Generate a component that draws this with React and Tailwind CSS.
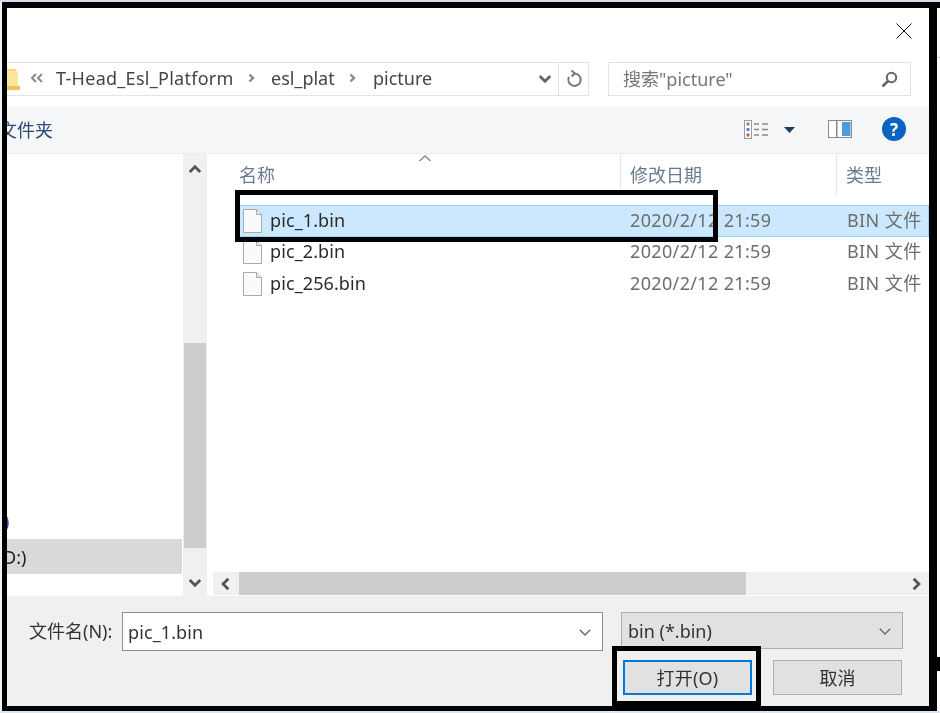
const files = [
  { name: "pic_1.bin", selected: true },
  { name: "pic_2.bin" },
  { name: "pic_256.bin" },
]

function Chevron({ d, className = "", stroke = "#555", width = 2.4 }) {
  return (
    <svg viewBox="0 0 12 12" className={className} fill="none" stroke={stroke} strokeWidth={width}>
      <path d={d} />
    </svg>
  )
}

function FileIcon() {
  return (
    <svg width="19" height="24" viewBox="0 0 19 24" className="shrink-0">
      <path d="M0.5 0.5H13.5L18.5 5.5V23.5H0.5Z" fill="#fafafa" stroke="#a9a9a9" />
      <path d="M13.5 0.5V5.5H18.5" fill="#e8e8e8" stroke="#a9a9a9" />
    </svg>
  )
}

function Crumb() {
  return <Chevron d="M3.5 2.5l3.5 3.5-3.5 3.5" stroke="#8a8a8a" width={2.4} className="w-[12px] h-[12px] shrink-0" />
}

export default function App() {
  return (
    <div className="relative w-[940px] h-[713px] overflow-hidden bg-[#dce6f1] flex flex-col font-['Noto_Sans','Noto_Sans_CJK_SC',sans-serif] text-[18px] leading-none text-[#333]">
      <div className="h-[2px] shrink-0 bg-[#d5dde8]" />
      <div className="flex h-[709px] shrink-0">
        <div className="w-[2px] shrink-0 bg-[#eef3f8]" />
        <div className="w-[935px] shrink-0 border-black border-l-[5px] border-r-[8px] border-t-[6px] border-b-[5px] bg-white flex flex-col overflow-hidden blur-[0.35px]">
          {/* Title bar */}
          <div className="h-[54px] shrink-0 flex justify-end items-start pt-[15px] pr-[17px]">
            <svg width="16" height="16" viewBox="0 0 16 16" stroke="#111" strokeWidth="1" fill="none">
              <path d="M0.5 0.5L15.5 15.5M15.5 0.5L0.5 15.5" />
            </svg>
          </div>

          {/* Address and search */}
          <div className="h-[34px] shrink-0 flex">
            <div className="w-[582px] border border-l-0 border-[#e3e3e3] flex items-center pb-[2px]">
              <svg width="13" height="24" viewBox="0 0 13 24" className="shrink-0">
                <path d="M0 3H9V20H13V24H0Z" fill="#f6d67f" />
                <path d="M0 5H11V21H0Z" fill="#fce59d" />
                <path d="M0 20H13V24H0Z" fill="#eec25c" />
              </svg>
              <svg width="13" height="10" viewBox="0 0 13 10" fill="none" stroke="#8a8a8a" strokeWidth="2" className="ml-[10px] shrink-0">
                <path d="M6 1L2 5L6 9M12 1L8 5L12 9" />
              </svg>
              <span className="ml-[13px] w-[177px] text-[#444] whitespace-nowrap tracking-[0.27px]">T-Head_Esl_Platform</span>
              <span className="ml-[13px]"><Crumb /></span>
              <span className="ml-[13px] w-[65px] text-[#444] whitespace-nowrap">esl_plat</span>
              <span className="ml-[11px]"><Crumb /></span>
              <span className="ml-[14px] text-[#444] whitespace-nowrap">picture</span>
              <span className="flex-1" />
              <Chevron d="M1.5 3.5L6 8l4.5-4.5" stroke="#666" className="w-[14px] h-[14px] mr-[6px] mt-[2px]" />
              <div className="w-[30px] h-[32px] mb-[-2px] border-l border-[#e3e3e3] flex items-center justify-center pl-[2px]">
                <svg width="17" height="18" viewBox="0 0 17 18" fill="none" stroke="#777" strokeWidth="2">
                  <path d="M8.5 3.5a6.2 6.2 0 1 1-5.6 3.5" />
                  <path d="M5.5 0.5L8.8 3.5L5.5 6.5" />
                </svg>
              </div>
            </div>
            <div className="ml-[19px] w-[303px] border border-[#e3e3e3] flex items-center justify-between pl-[14px] pr-[12px]">
              <span className="text-[#777]">搜索"picture"</span>
              <svg width="17" height="17" viewBox="0 0 17 17" fill="none" stroke="#666">
                <circle cx="10.5" cy="6.5" r="4.7" strokeWidth="2" />
                <path d="M7 10L1.5 15.5" strokeWidth="2.6" />
              </svg>
            </div>
          </div>

          <div className="h-[11px] shrink-0" />

          {/* Toolbar */}
          <div className="h-[47px] shrink-0 bg-[#f5f6f7] border-b border-[#e9ecef] flex items-center">
            <span className="ml-[-8px] text-[#2a4a73] whitespace-nowrap">文件夹</span>
            <span className="flex-1" />
            <svg width="25" height="19" viewBox="0 0 25 19" className="mr-[15px] mb-[2px]">
              <rect x="0.5" y="0.5" width="7" height="18" fill="#fff" stroke="#9a9a9a" />
              <rect x="2.5" y="2.5" width="3" height="3" fill="#8a8a8a" />
              <rect x="2.5" y="8" width="3" height="3" fill="#4a90d9" />
              <rect x="2.5" y="13.5" width="3" height="3" fill="#d9534f" />
              <path d="M10 4h5M18 4h6M10 9.5h5M18 9.5h6M10 15h5M18 15h6" stroke="#8a8a8a" strokeWidth="1.4" />
            </svg>
            <svg width="11" height="6" viewBox="0 0 11 6" className="mr-[33px]">
              <path d="M0 0H11L5.5 6Z" fill="#1c3d66" />
            </svg>
            <svg width="24" height="18" viewBox="0 0 24 18" className="mr-[30px] mb-[2px]">
              <rect x="0.5" y="0.5" width="23" height="17" fill="#fff" stroke="#8a8a8a" />
              <rect x="8" y="1" width="1.5" height="16" fill="#8a8a8a" />
              <rect x="14" y="2" width="8.5" height="14" fill="#4a9be0" />
            </svg>
            <div className="w-[24px] h-[24px] mr-[23px] mb-[2px] rounded-full bg-[#0a63c0] flex items-center justify-center text-white font-bold text-[17px]">?</div>
          </div>

          {/* Body */}
          <div className="flex-1 min-h-0 flex">
            {/* Navigation pane */}
            <div className="w-[176px] shrink-0 flex flex-col justify-end pb-[22px]">
              <div className="ml-[-3px] h-[17px] mb-[9px] text-[#4a3a9a] leading-[17px]">)</div>
              <div className="h-[35px] mr-[1px] bg-[#d9d9d9] flex items-center text-[#222] whitespace-nowrap"><span className="ml-[-4px]">D:)</span></div>
            </div>
            <div className="w-[24px] shrink-0 bg-[#f0f0f0] flex flex-col items-center">
              <Chevron d="M1.5 8.5L6 4l4.5 4.5" stroke="#555" className="w-[14px] h-[14px] mt-[8px]" />
              <div className="w-[22px] h-[205px] mt-[167px] bg-[#cdcdcd]" />
              <Chevron d="M1.5 3.5L6 8l4.5-4.5" stroke="#555" className="w-[14px] h-[14px] mt-[28px]" />
            </div>
            <div className="w-[6px] shrink-0" />

            {/* File list */}
            <div className="flex-1 min-w-0 flex flex-col relative">
              <div className="h-[41px] shrink-0 flex text-[#6b7a8c]">
                <div className="w-[407px] shrink-0 pl-[26px] pt-[12px] relative">
                  名称
                  <svg width="12" height="7" viewBox="0 0 12 7" fill="none" stroke="#888" strokeWidth="1.4" className="absolute left-[206px] top-[1px]">
                    <path d="M0.5 6L6 1L11.5 6" />
                  </svg>
                </div>
                <div className="w-[216px] shrink-0 border-l border-[#e5e5e5] pl-[9px] pt-[12px]">修改日期</div>
                <div className="flex-1 border-l border-[#e5e5e5] pl-[9px] pt-[12px]">类型</div>
              </div>
              <div className="h-[10px] shrink-0" />
              {files.map(file => (
                <div
                  key={file.name}
                  className={`ml-[25px] h-[31.5px] shrink-0 flex items-center border ${file.selected ? "bg-[#cce8ff] border-[#99d1ff]" : "border-transparent"}`}
                >
                  <span className="ml-[4px]"><FileIcon /></span>
                  <span className="ml-[8px] w-[360px] shrink-0 text-[#2b2b2b] pb-[2px] tracking-[0.1px]">{file.name}</span>
                  <span className="w-[217px] shrink-0 text-[#6d6d6d] whitespace-nowrap tracking-[0.35px] pb-[2px]">2020/2/12 21:59</span>
                  <span className="text-[#6d6d6d] whitespace-nowrap tracking-[0.4px] pb-[2px]">BIN 文件</span>
                </div>
              ))}
              <div className="flex-1" />
              <div className="h-[23px] mb-[1px] shrink-0 bg-[#f0f0f0] flex items-center">
                <Chevron d="M8 1.5L3.5 6L8 10.5" stroke="#555" className="w-[14px] h-[14px] ml-[6px]" />
                <div className="w-[507px] h-full ml-[6px] bg-[#cdcdcd]" />
                <span className="flex-1" />
                <Chevron d="M4 1.5L8.5 6L4 10.5" stroke="#555" className="w-[14px] h-[14px] mr-[6px]" />
              </div>
            </div>
          </div>

          {/* Footer */}
          <div className="h-[110px] shrink-0 bg-[#f0f0f0] flex flex-col">
            <div className="flex mt-[16px] h-[39px] items-start">
              <span className="ml-[22px] w-[93px] shrink-0 pt-[10px] text-[#333] whitespace-nowrap">文件名(N):</span>
              <div className="w-[481px] h-[39px] shrink-0 bg-white border border-[#8e8e8e] flex items-center justify-between pl-[5px] pr-[10px]">
                <span className="tracking-[0.1px]">pic_1.bin</span>
                <Chevron d="M1.5 4L6 8.5L10.5 4" stroke="#666" width={1.2} className="w-[14px] h-[14px]" />
              </div>
              <div className="ml-[18px] w-[282px] h-[37px] shrink-0 bg-[#e1e1e1] border border-[#adadad] flex items-center justify-between pl-[6px] pr-[10px]">
                <span>bin (*.bin)</span>
                <Chevron d="M1.5 4L6 8.5L10.5 4" stroke="#666" width={1.2} className="w-[14px] h-[14px]" />
              </div>
            </div>
            <div className="flex mt-[9px] ml-[616px]">
              <div className="w-[129px] h-[35px] bg-[#e1e1e1] border-[2px] border-[#0078d7] flex items-center justify-center tracking-[0.2px]">打开(O)</div>
              <div className="ml-[21px] w-[129px] h-[35px] bg-[#e1e1e1] border border-[#adadad] flex items-center justify-center">取消</div>
            </div>
          </div>
        </div>
        {/* Strip of the desktop right of the dialog */}
        <div className="flex-1 bg-white flex flex-col">
          <div className="h-[6px] bg-black" />
          <div className="h-[49px]" />
          <div className="h-[1px] bg-[#cccccc]" />
          <div className="h-[599px]" />
          <div className="h-[14px] bg-black" />
        </div>
      </div>

      {/* Annotation rectangles drawn over the dialog */}
      <div className="absolute left-[235px] top-[190px] w-[483px] h-[52px] border-[5px] border-black" />
      <div className="absolute left-[612px] top-[646px] w-[149px] h-[60px] border-[5px] border-black" />
    </div>
  )
}
